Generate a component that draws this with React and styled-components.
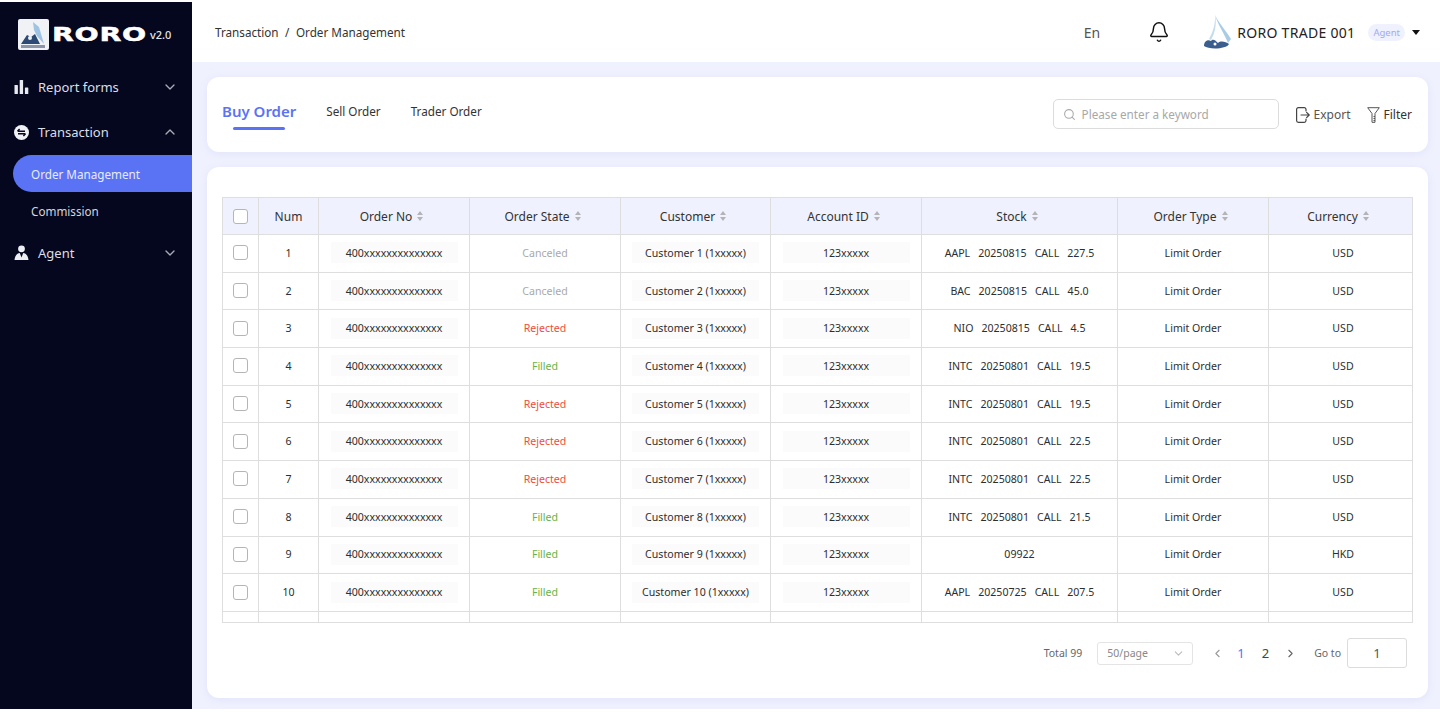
import React from 'react';
import styled, { createGlobalStyle } from 'styled-components';
import { Bell, ChevronDown, ChevronUp, ChevronLeft, ChevronRight, Search } from 'lucide-react';

const orders = [
  { state: 'Canceled', stock: ['AAPL', '20250815', 'CALL', '227.5'], currency: 'USD' },
  { state: 'Canceled', stock: ['BAC', '20250815', 'CALL', '45.0'], currency: 'USD' },
  { state: 'Rejected', stock: ['NIO', '20250815', 'CALL', '4.5'], currency: 'USD' },
  { state: 'Filled', stock: ['INTC', '20250801', 'CALL', '19.5'], currency: 'USD' },
  { state: 'Rejected', stock: ['INTC', '20250801', 'CALL', '19.5'], currency: 'USD' },
  { state: 'Rejected', stock: ['INTC', '20250801', 'CALL', '22.5'], currency: 'USD' },
  { state: 'Rejected', stock: ['INTC', '20250801', 'CALL', '22.5'], currency: 'USD' },
  { state: 'Filled', stock: ['INTC', '20250801', 'CALL', '21.5'], currency: 'USD' },
  { state: 'Filled', stock: ['09922'], currency: 'HKD' },
  { state: 'Filled', stock: ['AAPL', '20250725', 'CALL', '207.5'], currency: 'USD' },
];

const stateColors = { Canceled: '#a9a9a9', Rejected: '#ee4d3d', Filled: '#67b346' };

const columns = '36px 60px 151px 151px 150px 151px 196px 151px 1fr';

const GlobalStyle = createGlobalStyle`
  html, body { margin: 0; padding: 0; background: #fff; }
  body { font-family: "Noto Sans", Inter, sans-serif; color: #333; }
`;

const Page = styled.div`
  display: flex;
  height: 712px;
  padding: 2px 0 3px;
  box-sizing: border-box;
  overflow: hidden;
`;

const Sidebar = styled.aside`
  width: 192px;
  flex-shrink: 0;
  background: #05071f;
  color: #dcdee6;
  display: flex;
  flex-direction: column;
`;

const Brand = styled.div`
  display: flex;
  align-items: center;
  height: 62px;
  padding: 2px 0 0 18px;
  box-sizing: border-box;
`;

const Wordmark = styled.span`
  margin-left: 3px;
  font-family: "DejaVu Sans", sans-serif;
  font-size: 20px;
  font-weight: 700;
  letter-spacing: 0.5px;
  color: #fff;
  -webkit-text-stroke: 0.5px #fff;
  transform: scaleX(1.42);
  transform-origin: left center;
  width: 98px;
`;

const Version = styled.span`
  font-size: 11px;
  font-weight: 500;
  color: #e4e6ec;
`;

const Menu = styled.nav`
  display: flex;
  flex-direction: column;
`;

const MenuItem = styled.div`
  display: flex;
  align-items: center;
  gap: 9px;
  height: ${p => (p.$tall ? '46px' : '45px')};
  padding: 0 14px;
  font-size: 13px;
  svg:last-child { margin-left: auto; }
`;

const SubItem = styled.div`
  display: flex;
  align-items: center;
  height: ${p => (p.$active ? '37px' : '38px')};
  margin-left: 13px;
  padding-left: 18px;
  font-size: 11.7px;
  color: ${p => (p.$active ? '#e8ebff' : '#d3d5de')};
  background: ${p => (p.$active ? '#5a73f5' : 'transparent')};
  border-radius: 19px 0 0 19px;
`;

const Main = styled.div`
  flex: 1;
  min-width: 0;
  display: flex;
  flex-direction: column;
`;

const Header = styled.header`
  height: 60px;
  flex-shrink: 0;
  display: flex;
  align-items: center;
  padding: 0 20px 0 23px;
  background: #fff;
`;

const Breadcrumb = styled.div`
  display: flex;
  gap: 6.5px;
  font-size: 11.7px;
  color: #333;
`;

const Lang = styled.span`
  margin-left: auto;
  font-size: 14px;
  color: #555;
`;

const BellWrap = styled.span`
  display: flex;
  margin-left: 48px;
  color: #111;
`;

const Account = styled.div`
  display: flex;
  align-items: center;
  margin-left: 33px;
`;

const AccountName = styled.span`
  margin-left: 6px;
  font-size: 14px;
  color: #222;
  letter-spacing: 0.3px;
`;

const RoleBadge = styled.span`
  margin-left: 13px;
  padding: 2px 5px;
  font-size: 9.5px;
  color: #a3a9f2;
  background: #eff1fe;
  border-radius: 9px;
`;

const Caret = styled.span`
  margin-left: 7px;
  width: 0;
  height: 0;
  border: 4px solid transparent;
  border-top: 5px solid #111;
  border-bottom: 0;
`;

const Content = styled.main`
  flex: 1;
  min-height: 0;
  background: #eff1fe;
  padding: 15px 12px 11px 15px;
  display: flex;
  flex-direction: column;
  gap: 15px;
`;

const Card = styled.section`
  background: #fff;
  border-radius: 12px;
  box-shadow: 0 2px 8px rgba(120, 130, 220, 0.1);
`;

const Toolbar = styled(Card)`
  height: 75px;
  flex-shrink: 0;
  display: flex;
  align-items: center;
  padding: 0 16px 0 15px;
`;

const Tabs = styled.div`
  display: flex;
  gap: 30px;
  align-items: center;
  margin-top: -8px;
`;

const Tab = styled.div`
  position: relative;
  font-size: ${p => (p.$active ? '15px' : '11.7px')};
  font-weight: ${p => (p.$active ? 600 : 400)};
  color: ${p => (p.$active ? '#5a73f5' : '#333')};
  ${p => p.$active && `
    &::after {
      content: '';
      position: absolute;
      left: 11px;
      right: 11px;
      bottom: -9px;
      height: 3px;
      border-radius: 2px;
      background: #5a73f5;
    }
  `}
`;

const SearchBox = styled.div`
  margin-left: auto;
  margin-top: -1px;
  width: 226px;
  height: 30px;
  box-sizing: border-box;
  display: flex;
  align-items: center;
  gap: 6px;
  padding: 0 9px;
  border: 1px solid #dcdcdc;
  border-radius: 5px;
  font-size: 11.7px;
  color: #a8a8a8;
`;

const ToolButton = styled.div`
  display: flex;
  align-items: center;
  gap: 4px;
  margin-left: ${p => p.$gap}px;
  font-size: 12px;
  color: ${p => (p.$dark ? '#333' : '#555')};
`;

const TableCard = styled(Card)`
  flex: 1;
  min-height: 0;
  padding: 30px 15px 0;
  display: flex;
  flex-direction: column;
`;

const Table = styled.div`
  height: 426px;
  flex-shrink: 0;
  box-sizing: border-box;
  border: 1px solid #dedede;
  overflow: hidden;
`;

const Row = styled.div`
  display: grid;
  grid-template-columns: ${columns};
  height: ${p => (p.$head ? '37px' : '37.7px')};
  box-sizing: border-box;
  border-bottom: 1px solid #dedede;
  background: ${p => (p.$head ? '#eff1fe' : '#fff')};
  &:last-child { border-bottom: 0; height: 12px; }
`;

const Cell = styled.div`
  display: flex;
  align-items: center;
  justify-content: center;
  min-width: 0;
  padding-bottom: 1px;
  border-right: 1px solid #dedede;
  font-size: 10.6px;
  color: #2e2e2e;
  &:last-child { border-right: 0; padding-left: 5px; }
`;

const HeadCell = styled(Cell)`
  gap: 5px;
  padding-bottom: 0;
  font-size: 12px;
  color: #333;
  &:last-child { padding-left: 0; }
`;

const Pill = styled.span`
  width: 127px;
  height: 21px;
  display: flex;
  align-items: center;
  justify-content: center;
  background: #fbfbfb;
`;

const StateText = styled.span`
  color: ${p => stateColors[p.$state]};
`;

const StockText = styled.span`
  display: flex;
  gap: 8px;
`;

const Check = styled.span`
  width: 15px;
  height: 15px;
  box-sizing: border-box;
  border: 1px solid #b5b5b5;
  border-radius: 3px;
  background: #fff;
`;

const SortArrows = styled.span`
  display: inline-flex;
  flex-direction: column;
  gap: 2px;
  margin-right: 5px;
  &::before, &::after {
    content: '';
    width: 0;
    height: 0;
    border-left: 3.5px solid transparent;
    border-right: 3.5px solid transparent;
  }
  &::before { border-bottom: 4px solid #b4b4b4; }
  &::after { border-top: 4px solid #b4b4b4; }
`;

const Pager = styled.div`
  display: flex;
  align-items: center;
  justify-content: flex-end;
  height: 60px;
  padding-right: 6px;
  font-size: 10.5px;
  color: #666;
`;

const PageSize = styled.div`
  display: flex;
  align-items: center;
  justify-content: space-between;
  width: 96px;
  height: 23px;
  box-sizing: border-box;
  margin-left: 15px;
  padding: 0 7px 0 9px;
  border: 1px solid #e4e4e4;
  border-radius: 3px;
  font-size: 10.5px;
  color: #888;
`;

const PageNav = styled.span`
  display: flex;
  margin-left: ${p => p.$gap}px;
  color: #999;
`;

const PageNumber = styled.span`
  margin-left: ${p => p.$gap}px;
  font-size: 13px;
  color: ${p => (p.$active ? '#5a73f5' : '#444')};
`;

const GotoLabel = styled.span`
  margin-left: 17px;
`;

const GotoInput = styled.div`
  width: 60px;
  height: 30px;
  box-sizing: border-box;
  margin-left: 6px;
  display: flex;
  align-items: center;
  justify-content: center;
  border: 1px solid #dcdcdc;
  border-radius: 3px;
  font-size: 13px;
  color: #555;
`;

function LogoMark() {
  return (
    <svg width="31" height="31" viewBox="0 0 31 31">
      <rect width="31" height="31" rx="2" fill="#f1f2f5" />
      <path d="M15 3 L21 8 L26 25 L19 17 L16 11 Z" fill="#9fc3e2" />
      <path d="M3 25 L9 16 L13 18 L17 15 L22 25 Z" fill="#2c4a73" />
      <circle cx="12" cy="19" r="2" fill="#f1f2f5" />
      <rect x="3" y="26" width="24" height="3" fill="#8a96a8" />
    </svg>
  );
}

function Avatar() {
  return (
    <svg width="28" height="36" viewBox="0 0 28 36">
      <path d="M12 1 C15 8 24 18 28 25 L25 29 C22 21 15 11 12 1 Z" fill="#a9cce6" />
      <path d="M12 1 C12.5 10 10 18 6 25 L8 26 C12 19 14 10 12 1 Z" fill="#c5dcee" />
      <path d="M1 32 C1 27 5 25 8 27 C10 24 13 27 15 29 C18 26 23 28 26 30 C24 35 6 36 1 32 Z" fill="#3a5f8e" />
      <circle cx="12" cy="30" r="1.5" fill="#fff" />
    </svg>
  );
}

function BarsIcon() {
  return (
    <svg width="15" height="14" viewBox="-0.5 0 15 14" fill="#e8eaf0">
      <rect x="0" y="5" width="3.4" height="9" rx="0.6" />
      <rect x="5.2" y="0" width="3.4" height="14" rx="0.6" />
      <rect x="10.4" y="7.5" width="3.4" height="6.5" rx="0.6" />
    </svg>
  );
}

function TransferIcon() {
  return (
    <svg width="15" height="15" viewBox="0 0 15 15">
      <circle cx="7.5" cy="7.5" r="7.5" fill="#f1f2f6" />
      <path d="M3.5 6.2 H11 M5.6 4 L3.5 6.2 M11.5 8.8 H4 M9.4 11 L11.5 8.8" stroke="#05071f" strokeWidth="1.5" fill="none" />
    </svg>
  );
}

function AgentIcon() {
  return (
    <svg width="15" height="15" viewBox="0 0 15 15" fill="#eceef3">
      <circle cx="7.5" cy="3.8" r="3.4" />
      <path d="M0.5 15 C1 10 3.5 8.2 5.8 8 L7.5 12.5 L9.2 8 C11.5 8.2 14 10 14.5 15 Z" />
    </svg>
  );
}

function ExportIcon() {
  return (
    <svg width="14" height="16" viewBox="0 0 14 16" fill="none" stroke="#444" strokeWidth="1.2" strokeLinecap="round" strokeLinejoin="round">
      <path d="M10 4 V2.4 A1.8 1.8 0 0 0 8.2 0.6 H2.4 A1.8 1.8 0 0 0 0.6 2.4 V13.6 A1.8 1.8 0 0 0 2.4 15.4 H8.2 A1.8 1.8 0 0 0 10 13.6 V12" />
      <path d="M5 8 H13.2 M10.6 5.4 L13.2 8 L10.6 10.6" />
    </svg>
  );
}

function FilterIcon() {
  return (
    <svg width="13" height="16" viewBox="0 0 13 16" fill="none" stroke="#555" strokeWidth="1">
      <path d="M0.7 0.7 H12.3 L8 6.5 V15.3 H5 V6.5 Z" />
      <path d="M8 9.5 H6.5 M8 11.5 H6.5 M8 13.5 H6.5" />
    </svg>
  );
}

const headers = ['Order No', 'Order State', 'Customer', 'Account ID', 'Stock', 'Order Type', 'Currency'];

export default function App() {
  return (
    <Page>
      <GlobalStyle />
      <Sidebar>
        <Brand>
          <LogoMark />
          <Wordmark>RORO</Wordmark>
          <Version>v2.0</Version>
        </Brand>
        <Menu>
          <MenuItem>
            <BarsIcon />
            Report forms
            <ChevronDown size={16} color="#a9acb8" />
          </MenuItem>
          <MenuItem $tall>
            <TransferIcon />
            Transaction
            <ChevronUp size={16} color="#a9acb8" />
          </MenuItem>
          <SubItem $active>Order Management</SubItem>
          <SubItem>Commission</SubItem>
          <MenuItem>
            <AgentIcon />
            Agent
            <ChevronDown size={16} color="#a9acb8" />
          </MenuItem>
        </Menu>
      </Sidebar>
      <Main>
        <Header>
          <Breadcrumb>
            <span>Transaction</span>
            <span>/</span>
            <span>Order Management</span>
          </Breadcrumb>
          <Lang>En</Lang>
          <BellWrap><Bell size={22} strokeWidth={1.6} /></BellWrap>
          <Account>
            <Avatar />
            <AccountName>RORO TRADE 001</AccountName>
            <RoleBadge>Agent</RoleBadge>
            <Caret />
          </Account>
        </Header>
        <Content>
          <Toolbar>
            <Tabs>
              <Tab $active>Buy Order</Tab>
              <Tab>Sell Order</Tab>
              <Tab>Trader Order</Tab>
            </Tabs>
            <SearchBox>
              <Search size={13} color="#aaa" />
              Please enter a keyword
            </SearchBox>
            <ToolButton $gap={17}><ExportIcon />Export</ToolButton>
            <ToolButton $gap={16} $dark><FilterIcon />Filter</ToolButton>
          </Toolbar>
          <TableCard>
            <Table>
              <Row $head>
                <HeadCell><Check /></HeadCell>
                <HeadCell>Num</HeadCell>
                {headers.map(h => (
                  <HeadCell key={h}>{h}<SortArrows /></HeadCell>
                ))}
              </Row>
              {orders.map((o, i) => (
                <Row key={i}>
                  <Cell><Check /></Cell>
                  <Cell>{i + 1}</Cell>
                  <Cell><Pill>400xxxxxxxxxxxxxx</Pill></Cell>
                  <Cell><StateText $state={o.state}>{o.state}</StateText></Cell>
                  <Cell><Pill>Customer {i + 1} (1xxxxx)</Pill></Cell>
                  <Cell><Pill>123xxxxx</Pill></Cell>
                  <Cell>
                    <StockText>
                      {o.stock.map((s, j) => <span key={j}>{s}</span>)}
                    </StockText>
                  </Cell>
                  <Cell>Limit Order</Cell>
                  <Cell>{o.currency}</Cell>
                </Row>
              ))}
              <Row>
                <Cell /><Cell /><Cell /><Cell /><Cell /><Cell /><Cell /><Cell /><Cell />
              </Row>
            </Table>
            <Pager>
              Total 99
              <PageSize>50/page<ChevronDown size={13} color="#bbb" /></PageSize>
              <PageNav $gap={18}><ChevronLeft size={13} /></PageNav>
              <PageNumber $gap={13} $active>1</PageNumber>
              <PageNumber $gap={17}>2</PageNumber>
              <PageNav $gap={15}><ChevronRight size={13} color="#666" /></PageNav>
              <GotoLabel>Go to</GotoLabel>
              <GotoInput>1</GotoInput>
            </Pager>
          </TableCard>
        </Content>
      </Main>
    </Page>
  );
}
